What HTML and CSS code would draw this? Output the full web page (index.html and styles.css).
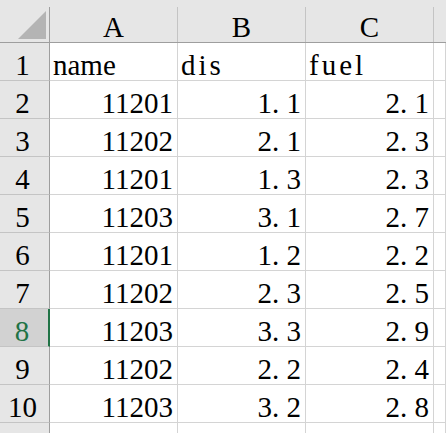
FILE: index.html
```html
<!DOCTYPE html>
<html>
<head>
<meta charset="utf-8">
<link rel="stylesheet" href="styles.css">
</head>
<body>
<div class="sheet">
  <div class="head">
    <div class="corner"><svg width="49" height="35" viewBox="0 0 49 35"><polygon points="18,32 46,32 46,4" fill="#b4b4b4"/></svg></div>
    <div class="colh">A</div>
    <div class="colh">B</div>
    <div class="colh">C</div>
    <div class="colh last"></div>
  </div>
  <div class="grid">
    <div class="rowh">1</div><div class="cell txt">name</div><div class="cell txt sp">dis</div><div class="cell txt sp">fuel</div><div class="cell"></div>
    <div class="rowh">2</div><div class="cell num">11201</div><div class="cell num">1<span class="dot">.</span>1</div><div class="cell num">2<span class="dot">.</span>1</div><div class="cell"></div>
    <div class="rowh">3</div><div class="cell num">11202</div><div class="cell num">2<span class="dot">.</span>1</div><div class="cell num">2<span class="dot">.</span>3</div><div class="cell"></div>
    <div class="rowh">4</div><div class="cell num">11201</div><div class="cell num">1<span class="dot">.</span>3</div><div class="cell num">2<span class="dot">.</span>3</div><div class="cell"></div>
    <div class="rowh">5</div><div class="cell num">11203</div><div class="cell num">3<span class="dot">.</span>1</div><div class="cell num">2<span class="dot">.</span>7</div><div class="cell"></div>
    <div class="rowh">6</div><div class="cell num">11201</div><div class="cell num">1<span class="dot">.</span>2</div><div class="cell num">2<span class="dot">.</span>2</div><div class="cell"></div>
    <div class="rowh">7</div><div class="cell num">11202</div><div class="cell num">2<span class="dot">.</span>3</div><div class="cell num">2<span class="dot">.</span>5</div><div class="cell"></div>
    <div class="rowh active">8</div><div class="cell num">11203</div><div class="cell num">3<span class="dot">.</span>3</div><div class="cell num">2<span class="dot">.</span>9</div><div class="cell"></div>
    <div class="rowh">9</div><div class="cell num">11202</div><div class="cell num">2<span class="dot">.</span>2</div><div class="cell num">2<span class="dot">.</span>4</div><div class="cell"></div>
    <div class="rowh">10</div><div class="cell num">11203</div><div class="cell num">3<span class="dot">.</span>2</div><div class="cell num">2<span class="dot">.</span>8</div><div class="cell"></div>
    <div class="rowh"></div><div class="cell"></div><div class="cell"></div><div class="cell"></div><div class="cell"></div>
  </div>
</div>
</body>
</html>
```
FILE: styles.css
```css
html, body {
  margin: 0;
  padding: 0;
  background: #ffffff;
  overflow: hidden;
}
.sheet {
  width: 446px;
  height: 433px;
  overflow: hidden;
  font-family: "Liberation Serif", "Times New Roman", Times, "DejaVu Serif", serif;
  font-size: 29px;
  color: #000;
}
.head {
  display: grid;
  grid-template-columns: 50px 128px 128px 128px 1fr;
  background: #e6e6e6;
  padding-top: 7px;
  height: 43px;
  box-sizing: border-box;
  border-bottom: 1px solid #9e9e9e;
}
.corner {
  border-right: 1px solid #9e9e9e;
  height: 35px;
  box-sizing: border-box;
}
.corner svg {
  display: block;
}
.colh {
  border-right: 1px solid #c4c4c4;
  text-align: center;
  padding-top: 4px;
  line-height: 32px;
  height: 35px;
  box-sizing: border-box;
}
.colh.last {
  border-right: none;
}
.grid {
  display: grid;
  grid-template-columns: 50px 128px 128px 128px 1fr;
  grid-auto-rows: 38px;
}
.rowh {
  background: #e6e6e6;
  border-right: 1px solid #9e9e9e;
  border-bottom: 1px solid #c4c4c4;
  box-sizing: border-box;
  text-align: center;
  padding-top: 6px;
  padding-right: 4px;
  line-height: 32px;
}
.rowh.active {
  background: #d2d2d2;
  color: #217346;
  border-right: 2px solid #217346;
}
.cell {
  border-right: 1px solid #d4d4d4;
  border-bottom: 1px solid #d4d4d4;
  box-sizing: border-box;
  padding-top: 6px;
  line-height: 32px;
  white-space: nowrap;
}
.txt {
  padding-left: 3px;
  text-align: left;
}
.sp {
  letter-spacing: 3px;
}
.num {
  text-align: right;
  padding-right: 4px;
}
.dot {
  display: inline-block;
  width: 0.5em;
  text-align: left;
}
```
